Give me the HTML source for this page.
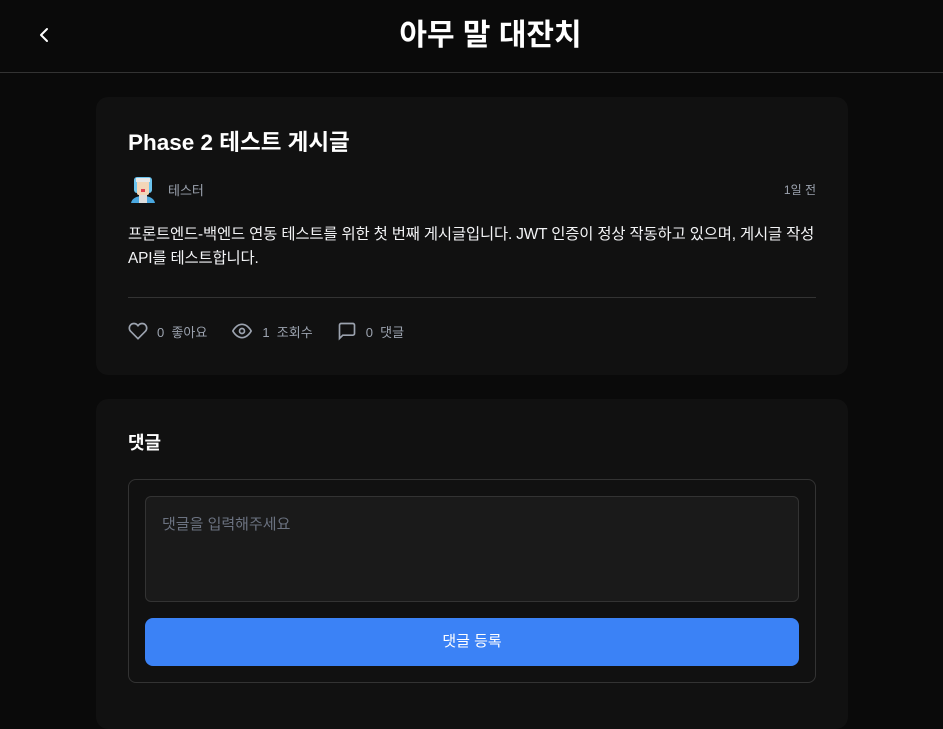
<!DOCTYPE html>
<html><head><meta charset="utf-8"><style>
*{box-sizing:border-box;margin:0;padding:0}
body{width:943px;height:704px;overflow:hidden;background:#0a0a0a;color:#fff;font-family:"Liberation Sans","Noto Sans CJK KR",sans-serif}
.hdr{height:73px;border-bottom:1px solid #333;position:relative}
.hdr h1{position:absolute;left:38px;right:0;top:14px;text-align:center;font-size:30px;font-weight:700;line-height:44px}
.back{position:absolute;left:36px;top:27px}
.card{position:absolute;left:96px;width:752px;background:#111;border-radius:12px}
.c1{top:97px;height:278px}
.c2{top:399px;height:330px}
.title{position:absolute;left:32px;top:30px;font-size:22.5px;font-weight:700;line-height:32px}
.av{position:absolute;left:34px;top:78px}
.name{position:absolute;left:72px;top:83px;font-size:13px;color:#9ca3af}
.time{position:absolute;right:32px;top:84px;font-size:12px;color:#9ca3af}
.desc{position:absolute;left:32px;top:126px;width:720px;font-size:15.4px;letter-spacing:-0.15px;line-height:24px;color:#f3f4f6;white-space:nowrap}
.div{position:absolute;left:32px;right:32px;top:200px;border-top:1px solid #333}
.stats{position:absolute;left:32px;top:224px;display:flex;align-items:center;font-size:13px;color:#9ca3af}
.stats svg{margin-right:9px}
.stats span{margin-right:24px}
.ct{position:absolute;left:32px;top:30px;font-size:18px;font-weight:700}
.form{position:absolute;left:32px;top:80px;width:688px;height:204px;border:1px solid #333;border-radius:8px}
.ta{position:absolute;left:16px;top:16px;width:654px;height:106px;background:#1a1a1a;border:1px solid #333;border-radius:6px;padding:16px;font-size:15px;color:#6b7280}
.btn{position:absolute;left:16px;top:138px;width:654px;height:48px;background:#3b82f6;border-radius:8px;text-align:center;line-height:48px;font-size:15px}
</style></head><body>
<div class="hdr">
<svg class="back" width="16" height="16" viewBox="0 0 16 16"><path d="M11 2 5 8l6 6" stroke="#fff" stroke-width="2" fill="none" stroke-linecap="round" stroke-linejoin="round"/></svg>
<h1>아무 말 대잔치</h1></div>
<div class="card c1">
<div class="title">Phase 2 테스트 게시글</div>
<svg class="av" width="26" height="30" viewBox="0 0 26 30"><path d="M1 28c1-5 6-7 12-7s11 2 12 7z" fill="#4aa8e0"/><rect x="9" y="20" width="8" height="8" fill="#ddd"/><rect x="4" y="2" width="18" height="16" rx="3" fill="#6cc4ee"/><rect x="7" y="5" width="12" height="15" rx="2" fill="#f3d6b8"/><rect x="6" y="3" width="14" height="4" fill="#e8e8e8"/><rect x="11" y="14" width="4" height="3" fill="#e04050"/></svg>
<div class="name">테스터</div>
<div class="time">1일 전</div>
<div class="desc">프론트엔드-백엔드 연동 테스트를 위한 첫 번째 게시글입니다. JWT 인증이 정상 작동하고 있으며, 게시글 작성<br>API를 테스트합니다.</div>
<div class="div"></div>
<div class="stats">
<svg width="20" height="20" viewBox="0 0 24 24" fill="none" stroke="#9ca3af" stroke-width="2"><path d="M20.8 4.6a5.5 5.5 0 0 0-7.8 0L12 5.7l-1-1.1a5.5 5.5 0 0 0-7.8 7.8L12 21.2l8.8-8.8a5.5 5.5 0 0 0 0-7.8z"/></svg><span>0 &nbsp;좋아요</span>
<svg width="22" height="20" viewBox="0 0 24 24" fill="none" stroke="#9ca3af" stroke-width="2"><path d="M1 12s4-8 11-8 11 8 11 8-4 8-11 8-11-8-11-8z"/><circle cx="12" cy="12" r="3"/></svg><span>1 &nbsp;조회수</span>
<svg width="20" height="20" viewBox="0 0 24 24" fill="none" stroke="#9ca3af" stroke-width="2"><path d="M21 15a2 2 0 0 1-2 2H7l-4 4V5a2 2 0 0 1 2-2h14a2 2 0 0 1 2 2z"/></svg><span>0 &nbsp;댓글</span>
</div></div>
<div class="card c2">
<div class="ct">댓글</div>
<div class="form"><div class="ta">댓글을 입력해주세요</div><div class="btn">댓글 등록</div></div>
</div>
</body></html>
